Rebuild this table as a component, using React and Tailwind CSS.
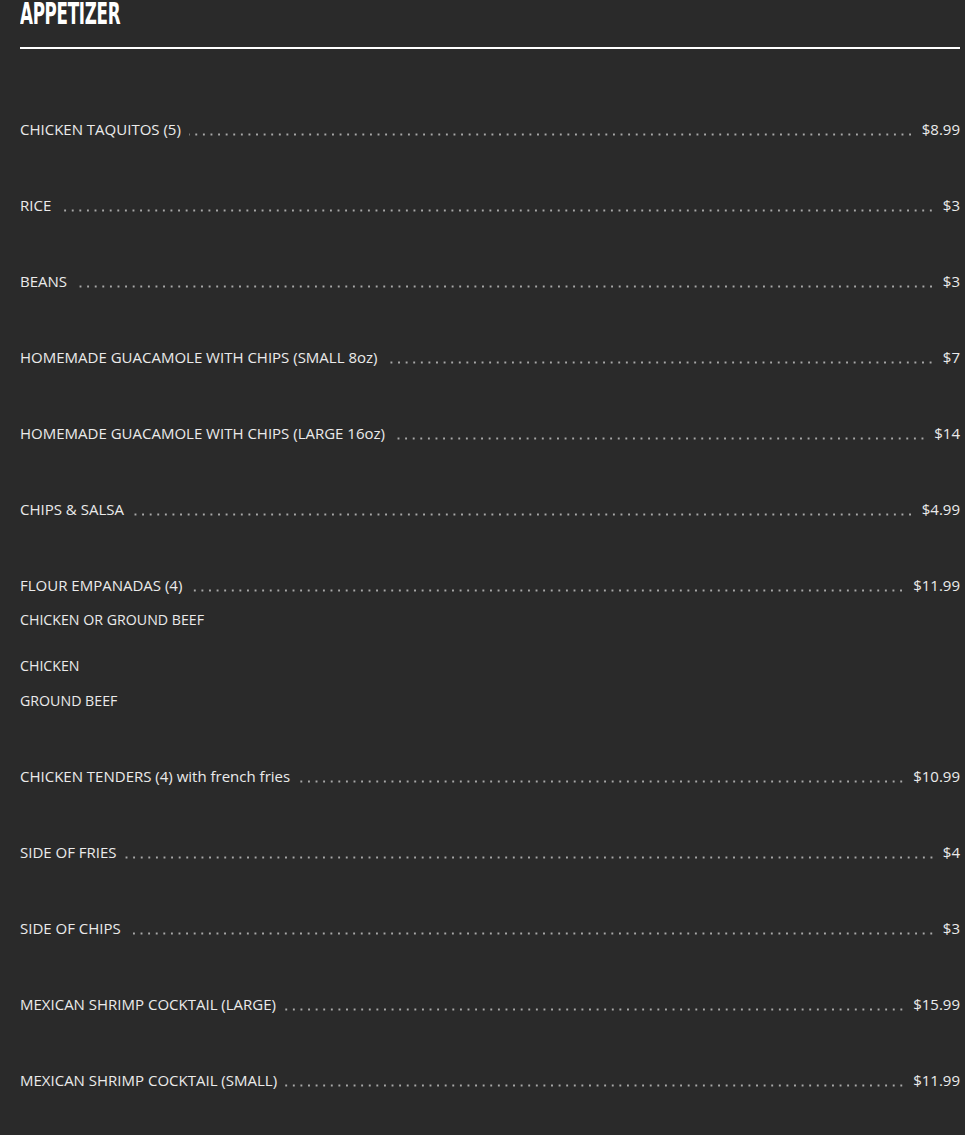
const items = [
  { name: "CHICKEN TAQUITOS (5)", price: "$8.99" },
  { name: "RICE", price: "$3" },
  { name: "BEANS", price: "$3" },
  { name: "HOMEMADE GUACAMOLE WITH CHIPS (SMALL 8oz)", price: "$7" },
  { name: "HOMEMADE GUACAMOLE WITH CHIPS (LARGE 16oz)", price: "$14" },
  { name: "CHIPS & SALSA", price: "$4.99" },
  {
    name: "FLOUR EMPANADAS (4)",
    price: "$11.99",
    desc: "CHICKEN OR GROUND BEEF",
    options: ["CHICKEN", "GROUND BEEF"],
  },
  { name: "CHICKEN TENDERS (4) with french fries", price: "$10.99" },
  { name: "SIDE OF FRIES", price: "$4" },
  { name: "SIDE OF CHIPS", price: "$3" },
  { name: "MEXICAN SHRIMP COCKTAIL (LARGE)", price: "$15.99" },
  { name: "MEXICAN SHRIMP COCKTAIL (SMALL)", price: "$11.99" },
];

const MenuRow = ({ item }) => (
  <div>
    <div className="flex items-end h-[22px] leading-[22px] text-[15px]">
      <span className="whitespace-nowrap">{item.name}</span>
      <span className="flex-1 mx-[8px] mb-[4px] h-[3px] bg-[radial-gradient(circle,#a8a8a8_0.9px,transparent_1.3px)] bg-[length:7.6px_3px] bg-repeat-x bg-right"></span>
      <span className="whitespace-nowrap">{item.price}</span>
    </div>
    {item.desc && (
      <p className="text-[14.2px] leading-[20px] mt-[14px]">{item.desc}</p>
    )}
    {item.options && (
      <div className="mt-[26px] flex flex-col gap-[15px]">
        {item.options.map((o) => (
          <p key={o} className="text-[14.2px] leading-[20px]">{o}</p>
        ))}
      </div>
    )}
  </div>
);

export default function App() {
  return (
    <div className="min-h-[1135px] bg-[#2a2a2a] text-[#ebebeb] pl-5 pr-[5px] font-['Open_Sans',sans-serif]">
      <div className="border-b-2 border-white h-[49px] pt-[1px]">
        <h1 className="inline-block origin-top-left scale-x-[0.62] font-['DejaVu_Sans_Condensed',sans-serif] font-bold text-[30px] leading-[26px] tracking-[-0.5px] text-white">
          APPETIZER
        </h1>
      </div>
      <div className="pt-[69px] flex flex-col gap-[54px]">
        {items.map((item) => (
          <MenuRow key={item.name} item={item} />
        ))}
      </div>
    </div>
  );
}
